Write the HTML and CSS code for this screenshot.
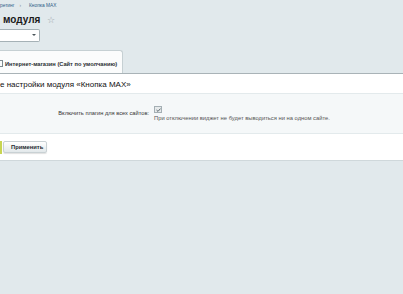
FILE: index.html
```html
<!DOCTYPE html>
<html lang="ru">
<head>
<meta charset="utf-8">
<link rel="stylesheet" href="styles.css">
</head>
<body>
<div class="crumbs"><span class="crumb">ретинг</span><span class="sep">›</span><span class="crumb">Кнопка MAX</span></div>
<div class="title-row"><h1 class="title">модуля</h1><span class="star">☆</span></div>
<div class="select-row"><div class="select"><span class="arrow"></span></div></div>
<div class="tabs"><div class="tab"><span class="tab-icon"></span>Интернет-магазин (Сайт по умолчанию)</div></div>
<div class="panel">
  <div class="panel-title">е настройки модуля «Кнопка MAX»</div>
  <div class="fields">
    <div class="field">
      <div class="label">Включить плагин для всех сайтов:</div>
      <div class="value">
        <span class="checkbox"><svg width="5" height="4" viewBox="0 0 5 4"><path d="M0.5 2 L2 3.4 L4.5 0.6" fill="none" stroke="#59666c" stroke-width="1"/></svg></span>
        <div class="hint">При отключении виджет не будет выводиться ни на одном сайте.</div>
      </div>
    </div>
  </div>
  <div class="buttons"><span class="bar"></span><button class="btn">Применить</button></div>
</div>
</body>
</html>
```
FILE: styles.css
```css
html, body { margin: 0; padding: 0; }
body {
  background: #e1e9ec;
  font-family: "Liberation Sans", Arial, sans-serif;
  color: #000;
  width: 403px;
  height: 294px;
  overflow: hidden;
}
.crumbs {
  height: 11px;
  padding-top: 2px;
  font-size: 4.8px;
  line-height: 7px;
  color: #2e5d87;
  display: flex;
  gap: 5px;
  white-space: nowrap;
}
.crumbs .sep { color: #7b8a91; }
.crumbs .crumb:last-child { margin-left: 3px; }
.title-row {
  display: flex;
  align-items: center;
  gap: 7px;
  padding-left: 3px;
  height: 14px;
}
.title {
  margin: 0;
  font-size: 10px;
  font-weight: bold;
  line-height: 14px;
  color: #1a1a1a;
}
.star { font-size: 9px; color: #98a2a7; line-height: 9px; margin-top: 1px; }
.select-row { padding-top: 2px; height: 21px; }
.select {
  width: 39px;
  height: 11px;
  background: #fff;
  border: 1px solid #a5b1b6;
  border-left: none;
  border-radius: 0 2px 2px 0;
  position: relative;
}
.arrow {
  position: absolute;
  right: 3px;
  top: 4px;
  border-left: 2px solid transparent;
  border-right: 2px solid transparent;
  border-top: 2px solid #4a555a;
}
.tabs { height: 23px; display: flex; align-items: flex-end; }
.tab {
  width: 123px;
  height: 23px;
  box-sizing: border-box;
  background: #fbfcfc;
  border: 1px solid #c6d0d3;
  border-left: none;
  border-bottom: none;
  border-radius: 0 3px 0 0;
  font-size: 5.7px;
  font-weight: bold;
  color: #2a2f31;
  display: flex;
  align-items: center;
  gap: 2px;
  padding-top: 3px;
  white-space: nowrap;
}
.tab-icon {
  width: 2px;
  height: 5px;
  border: 1px solid #7e8a8f;
  border-left: none;
}
.panel {
  background: #fff;
  border-top: 1px solid #a9b3b7;
  border-bottom: 1px solid #cfd8db;
}
.panel-title {
  font-size: 8px;
  line-height: 10px;
  padding: 6px 0 3px 0;
  color: #111;
  height: 10px;
}
.fields {
  background: #f5f8f9;
  border-top: 1px solid #e3eaec;
  border-bottom: 1px solid #e3eaec;
  padding: 12px 0 11px 0;
}
.field { display: flex; gap: 5px; }
.label {
  width: 149px;
  text-align: right;
  font-size: 5.7px;
  line-height: 7px;
  color: #333;
  padding-top: 4px;
}
.value { display: flex; flex-direction: column; gap: 2px; }
.checkbox {
  width: 6px;
  height: 5px;
  border: 1px solid #a4afb4;
  background: #e6eaeb;
  display: flex;
  align-items: center;
  justify-content: center;
}
.checkbox svg { display: block; }
.hint { font-size: 5.8px; line-height: 7px; color: #555; }
.buttons {
  height: 26px;
  display: flex;
  align-items: center;
}
.bar {
  width: 2px;
  height: 13px;
  background: #c8d552;
  margin-right: 1px;
}
.btn {
  font-family: "Liberation Sans", Arial, sans-serif;
  font-size: 5.8px;
  font-weight: bold;
  color: #1f2a30;
  height: 12px;
  width: 44px;
  padding: 0 0 0 2px;
  text-align: left;
  text-indent: 5px;
  border: 1px solid #c9d1d4;
  border-radius: 2px;
  background: linear-gradient(#ffffff, #e2e8ea);
  box-shadow: 0 1px 1px rgba(0,0,0,0.12);
}
```
